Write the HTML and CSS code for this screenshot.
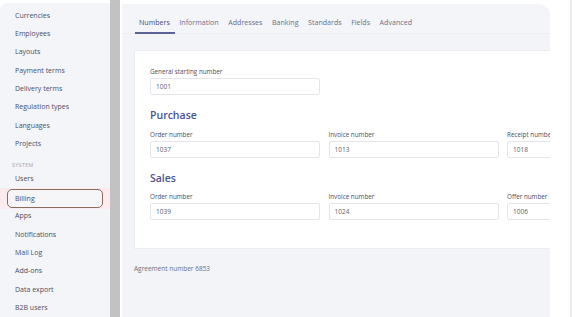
FILE: index.html
```html
<!DOCTYPE html>
<html>
<head>
<meta charset="utf-8">
<link rel="stylesheet" href="styles.css">
</head>
<body>
<div class="app">
  <aside class="sidebar">
    <ul class="nav">
      <li class="nav-item">Currencies</li>
      <li class="nav-item">Employees</li>
      <li class="nav-item">Layouts</li>
      <li class="nav-item">Payment terms</li>
      <li class="nav-item">Delivery terms</li>
      <li class="nav-item">Regulation types</li>
      <li class="nav-item">Languages</li>
      <li class="nav-item">Projects</li>
      <li class="nav-section">SYSTEM</li>
      <li class="nav-item">Users</li>
      <li class="nav-item nav-item--active"><span class="nav-box">Billing</span></li>
      <li class="nav-item">Apps</li>
      <li class="nav-item">Notifications</li>
      <li class="nav-item">Mail Log</li>
      <li class="nav-item">Add-ons</li>
      <li class="nav-item">Data export</li>
      <li class="nav-item">B2B users</li>
    </ul>
  </aside>
  <div class="scrollbar"></div>
  <main class="panel">
    <nav class="tabs">
      <span class="tab tab--active">Numbers</span>
      <span class="tab">Information</span>
      <span class="tab">Addresses</span>
      <span class="tab">Banking</span>
      <span class="tab">Standards</span>
      <span class="tab">Fields</span>
      <span class="tab">Advanced</span>
    </nav>
    <div class="content">
      <section class="card">
        <div class="field field--single">
          <label class="label">General starting number</label>
          <div class="input">1001</div>
        </div>
        <h2 class="heading">Purchase</h2>
        <div class="row">
          <div class="field"><label class="label">Order number</label><div class="input">1037</div></div>
          <div class="field"><label class="label">Invoice number</label><div class="input">1013</div></div>
          <div class="field"><label class="label">Receipt number</label><div class="input">1018</div></div>
        </div>
        <h2 class="heading">Sales</h2>
        <div class="row">
          <div class="field"><label class="label">Order number</label><div class="input">1039</div></div>
          <div class="field"><label class="label">Invoice number</label><div class="input">1024</div></div>
          <div class="field"><label class="label">Offer number</label><div class="input">1006</div></div>
        </div>
      </section>
      <p class="agreement">Agreement number 6853</p>
    </div>
  </main>
  <div class="edge"></div>
</div>
</body>
</html>
```
FILE: styles.css
```css
* { box-sizing: border-box; }
html, body { margin: 0; padding: 0; }
body {
  width: 582px;
  height: 317px;
  overflow: hidden;
  background: #ffffff;
  font-family: "Open Sans", "Noto Sans", sans-serif;
  color: #4a4f63;
}
.app {
  display: flex;
  height: 317px;
}
.sidebar {
  width: 110px;
  flex: none;
  margin-top: 3px;
  background: #f4f5f9;
  border-top-left-radius: 8px;
}
.nav {
  list-style: none;
  margin: 0;
  padding: 3px 0 0 0;
}
.nav-item {
  height: 18.35px;
  display: flex;
  align-items: center;
  padding-left: 15px;
  font-size: 7px;
  color: #4a4f63;
}
.nav-section {
  height: 17px;
  display: flex;
  align-items: flex-end;
  padding-left: 12px;
  padding-bottom: 1px;
  font-size: 5.5px;
  color: #a3a7b3;
  letter-spacing: 0.2px;
}
.nav-item--active {
  background: #fcebee;
  padding-left: 7px;
  height: 21px;
  margin: 0 0 -2.5px 0;
}
.nav-box {
  display: flex;
  align-items: center;
  width: 96px;
  height: 19px;
  padding-left: 7px;
  border: 1.5px solid #8b6b5c;
  border-radius: 5px;
  background: #f6f6f9;
}
.scrollbar {
  width: 10px;
  flex: none;
  background: #c2c2c2;
}
.panel {
  width: 428px;
  flex: none;
  margin-left: 2px;
  margin-top: 4px;
  background: #f3f4f8;
  border-top-right-radius: 12px;
  overflow: hidden;
  display: flex;
  flex-direction: column;
}
.tabs {
  height: 30px;
  flex: none;
  display: flex;
  align-items: stretch;
  padding-left: 13px;
  background: #f4f5f9;
  border-bottom: 1px solid #eceef3;
}
.tab {
  display: flex;
  align-items: center;
  padding: 8px 5.5px 0 4px;
  font-size: 7.1px;
  color: #6a7088;
  border-bottom: 2px solid transparent;
  margin-bottom: -1px;
}
.tab--active {
  color: #3e4a7c;
  border-bottom-color: #5a6494;
}
.content {
  padding: 16px 0 0 12px;
}
.card {
  width: 440px;
  background: #ffffff;
  border: 1px solid #eaecf1;
  padding: 16px 0 28px 15px;
}
.field--single {
  width: 170px;
}
.row {
  display: grid;
  grid-template-columns: 170px 170px 170px;
  column-gap: 8.5px;
}
.label {
  display: block;
  font-size: 6.3px;
  line-height: 9px;
  font-weight: 500;
  color: #4a4e62;
  margin-bottom: 2px;
  white-space: nowrap;
}
.input {
  height: 17px;
  border: 1px solid #e3e5ea;
  border-radius: 2px;
  display: flex;
  align-items: center;
  padding-left: 5px;
  font-size: 6.5px;
  color: #5a5f70;
  background: #fff;
}
.heading {
  margin: 13px 0 7.5px 0;
  font-size: 10.5px;
  line-height: 14px;
  font-weight: 600;
  color: #4a5590;
}
.agreement {
  margin: 15px 0 0 0;
  font-size: 6.5px;
  color: #6b6f7a;
}
.edge {
  width: 2px;
  flex: none;
  margin-left: 20px;
  background: #ebebeb;
}
```
